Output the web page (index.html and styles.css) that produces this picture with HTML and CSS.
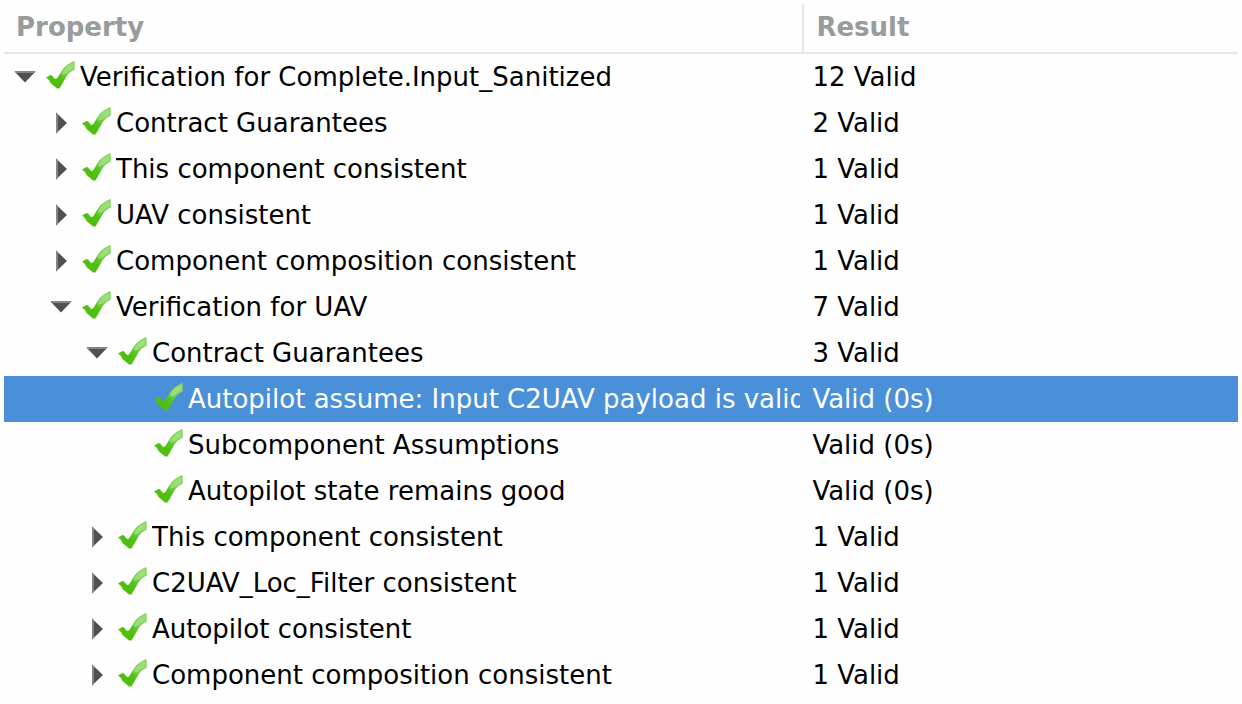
FILE: index.html
```
<!DOCTYPE html>
<html lang="en">
<head>
<meta charset="utf-8">
<title>Verification results</title>
<link rel="stylesheet" href="styles.css">
</head>
<body>
<svg class="defs" aria-hidden="true">
  <defs>
    <linearGradient id="tick-fill" gradientUnits="userSpaceOnUse" x1="27" y1="4" x2="12" y2="20">
      <stop offset="0" stop-color="#84d65c"/>
      <stop offset="0.5" stop-color="#74cf48"/>
      <stop offset="0.75" stop-color="#55c41c"/>
      <stop offset="1" stop-color="#4fbf0e"/>
    </linearGradient>
    <symbol id="tick" viewBox="0 0 30 32">
      <path fill="url(#tick-fill)" d="M0 16.500 L4.500 14 L6 14.500 L9 18 L11 17.500 L17 8 Q21 3 28 0 L28.700 1 L28.700 8.500 Q23 11 20.500 15.500 L13.500 27.500 L11 27.500 L4.500 22 L3 19 Z"/>
      <path fill="#ade58f" d="M16.500 11 L18.500 8 Q22 4 27 2 L27.500 7.500 Q23 10 20.500 12.500 L16 14 Z" opacity="0.65"/>
    </symbol>
    <symbol id="open" viewBox="0 0 22 12">
      <path fill="#505050" d="M0.500 0.500 H21.500 L11 11.500 Z"/>
      <path fill="#858585" d="M0.500 0 H21.500 L20 2 H2 Z"/>
    </symbol>
    <symbol id="closed" viewBox="0 0 12 22">
      <path fill="#505050" d="M1 0.500 V21.500 L12 11 Z"/>
      <path fill="#858585" d="M1 0.500 V21.500 L3 20 V2 Z"/>
    </symbol>
  </defs>
</svg>
<main class="results">
<table class="tree">
  <colgroup><col class="col-property"><col class="col-result"></colgroup>
  <thead>
    <tr><th scope="col">Property</th><th scope="col">Result</th></tr>
  </thead>
  <tbody>
    <tr><td><div class="node"><button class="toggle" aria-label="Collapse" aria-expanded="true"><svg class="open"><use href="#open"/></svg></button><svg class="tick"><use href="#tick"/></svg><span class="label">Verification for Complete.Input_Sanitized</span></div></td><td>12 Valid</td></tr>
    <tr><td><div class="node level-1"><button class="toggle" aria-label="Expand" aria-expanded="false"><svg class="closed"><use href="#closed"/></svg></button><svg class="tick"><use href="#tick"/></svg><span class="label">Contract Guarantees</span></div></td><td>2 Valid</td></tr>
    <tr><td><div class="node level-1"><button class="toggle" aria-label="Expand" aria-expanded="false"><svg class="closed"><use href="#closed"/></svg></button><svg class="tick"><use href="#tick"/></svg><span class="label">This component consistent</span></div></td><td>1 Valid</td></tr>
    <tr><td><div class="node level-1"><button class="toggle" aria-label="Expand" aria-expanded="false"><svg class="closed"><use href="#closed"/></svg></button><svg class="tick"><use href="#tick"/></svg><span class="label">UAV consistent</span></div></td><td>1 Valid</td></tr>
    <tr><td><div class="node level-1"><button class="toggle" aria-label="Expand" aria-expanded="false"><svg class="closed"><use href="#closed"/></svg></button><svg class="tick"><use href="#tick"/></svg><span class="label">Component composition consistent</span></div></td><td>1 Valid</td></tr>
    <tr><td><div class="node level-1"><button class="toggle" aria-label="Collapse" aria-expanded="true"><svg class="open"><use href="#open"/></svg></button><svg class="tick"><use href="#tick"/></svg><span class="label">Verification for UAV</span></div></td><td>7 Valid</td></tr>
    <tr><td><div class="node level-2"><button class="toggle" aria-label="Collapse" aria-expanded="true"><svg class="open"><use href="#open"/></svg></button><svg class="tick"><use href="#tick"/></svg><span class="label">Contract Guarantees</span></div></td><td>3 Valid</td></tr>
    <tr class="selected"><td><div class="node level-3"><svg class="tick"><use href="#tick"/></svg><span class="label">Autopilot assume: Input C2UAV payload is valid</span></div></td><td>Valid (0s)</td></tr>
    <tr><td><div class="node level-3"><svg class="tick"><use href="#tick"/></svg><span class="label">Subcomponent Assumptions</span></div></td><td>Valid (0s)</td></tr>
    <tr><td><div class="node level-3"><svg class="tick"><use href="#tick"/></svg><span class="label">Autopilot state remains good</span></div></td><td>Valid (0s)</td></tr>
    <tr><td><div class="node level-2"><button class="toggle" aria-label="Expand" aria-expanded="false"><svg class="closed"><use href="#closed"/></svg></button><svg class="tick"><use href="#tick"/></svg><span class="label">This component consistent</span></div></td><td>1 Valid</td></tr>
    <tr><td><div class="node level-2"><button class="toggle" aria-label="Expand" aria-expanded="false"><svg class="closed"><use href="#closed"/></svg></button><svg class="tick"><use href="#tick"/></svg><span class="label">C2UAV_Loc_Filter consistent</span></div></td><td>1 Valid</td></tr>
    <tr><td><div class="node level-2"><button class="toggle" aria-label="Expand" aria-expanded="false"><svg class="closed"><use href="#closed"/></svg></button><svg class="tick"><use href="#tick"/></svg><span class="label">Autopilot consistent</span></div></td><td>1 Valid</td></tr>
    <tr><td><div class="node level-2"><button class="toggle" aria-label="Expand" aria-expanded="false"><svg class="closed"><use href="#closed"/></svg></button><svg class="tick"><use href="#tick"/></svg><span class="label">Component composition consistent</span></div></td><td>1 Valid</td></tr>
  </tbody>
</table>
</main>
</body>
</html>
```
FILE: styles.css
```
* { box-sizing: border-box; }

body {
  margin: 0;
  background: #fefefe;
  color: #000;
  font: 26px/46px "DejaVu Sans", sans-serif;
}

.defs { display: block; width: 0; height: 0; }

.results { padding: 4px; }

.tree {
  width: 100%;
  table-layout: fixed;
  border-collapse: separate;
  border-spacing: 0;
}

.col-property { width: 64.7%; }

.tree th {
  padding: 0 12px 2px;
  border-bottom: 2px solid #e6e6e6;
  color: #989c9b;
  font-weight: 700;
  text-align: left;
}

.tree th + th { border-left: 2px solid #e6e6e6; }

.tree td {
  padding: 0 0 0 10px;
  white-space: nowrap;
}

.tree td:first-child { padding: 0 2px 0 6px; }

.node {
  display: flex;
  align-items: center;
  height: 46px;
  overflow: hidden;
}

.level-1 { padding-left: 36px; }
.level-2 { padding-left: 72px; }
.level-3 { padding-left: 144px; }

.toggle {
  display: flex;
  flex: none;
  align-items: center;
  justify-content: center;
  width: 30px;
  height: 30px;
  margin-right: 6px;
  padding: 0;
  border: 0;
  background: none;
}

.open { width: 22px; height: 12px; }
.closed { width: 12px; height: 22px; }

.tick {
  flex: none;
  width: 30px;
  height: 32px;
  margin-right: 4px;
}

.label {
  flex: 1;
  min-width: 0;
  overflow: hidden;
}

.selected { background: #4a90d9; color: #fff; }
```
